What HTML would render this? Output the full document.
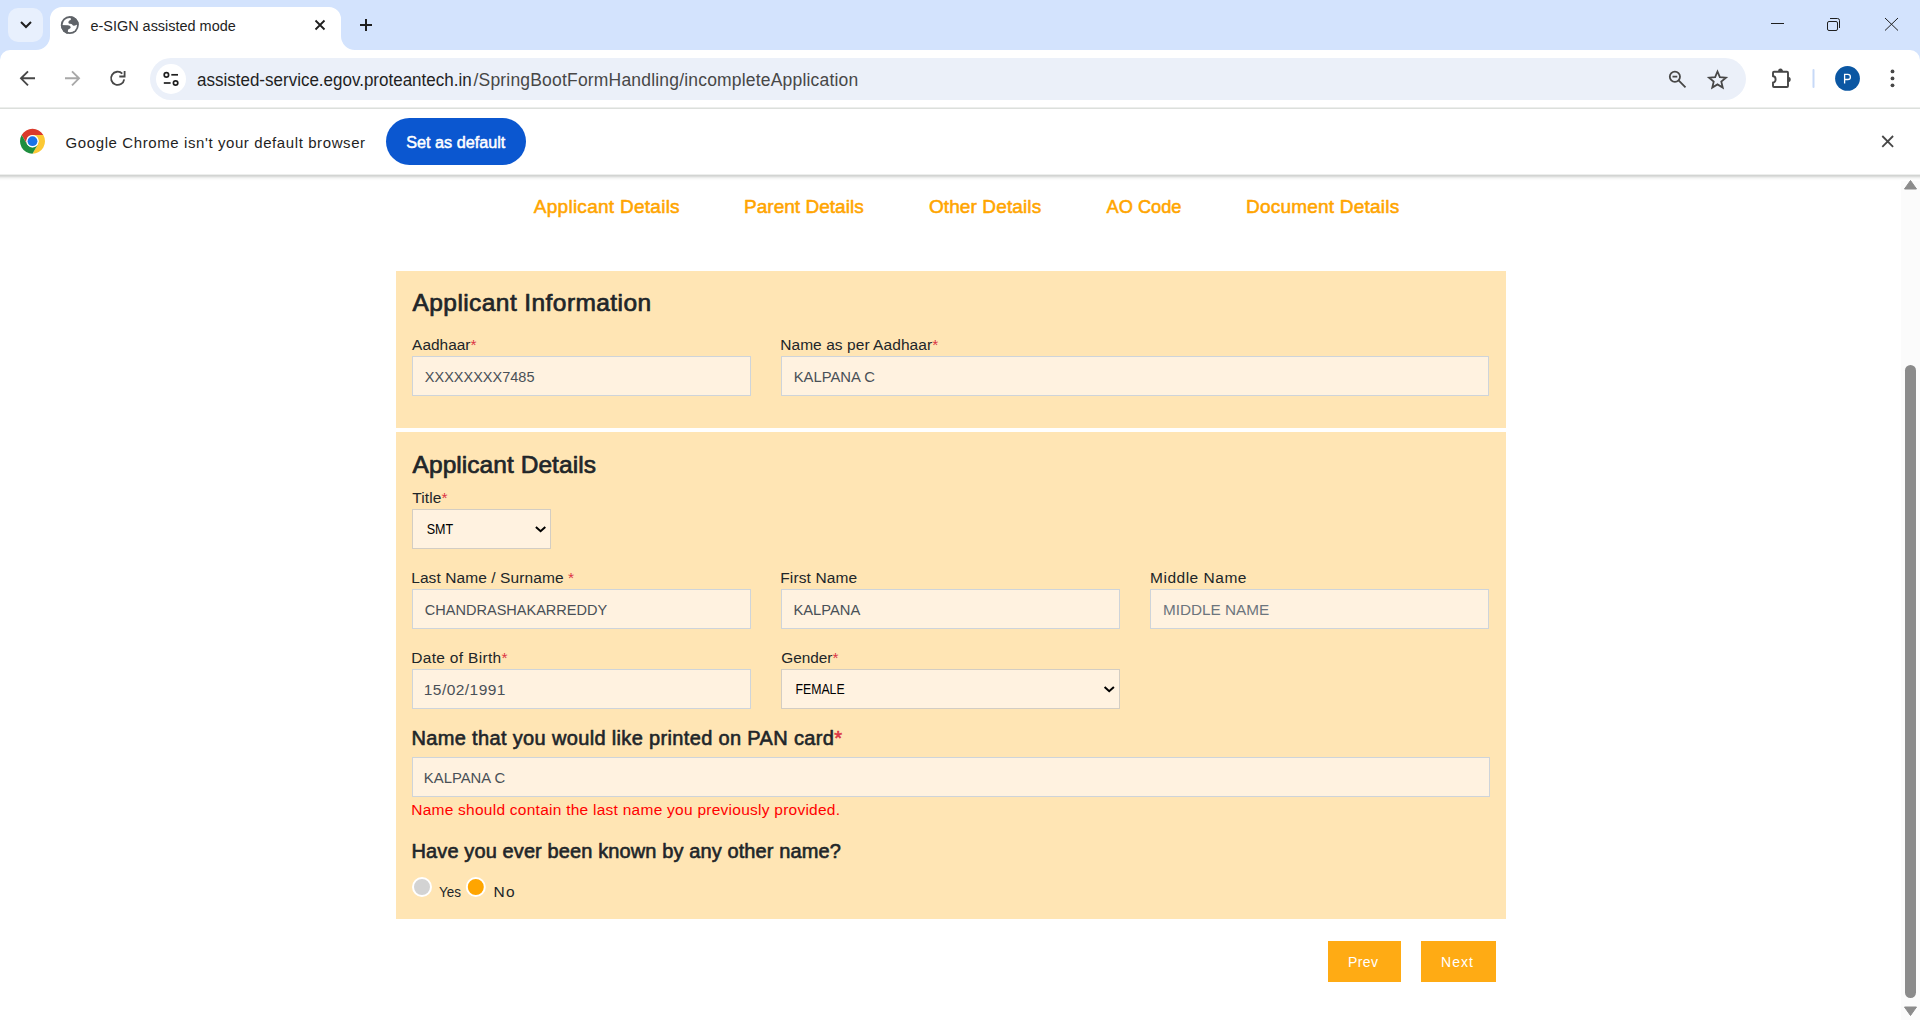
<!DOCTYPE html>
<html><head><meta charset="utf-8"><title>e-SIGN assisted mode</title>
<style>
html,body{margin:0;padding:0;width:1920px;height:1020px;overflow:hidden;background:#fff;font-family:"Liberation Sans",sans-serif;}
.a{position:absolute;box-sizing:border-box;}
.panel{background:#FFE5B4;}
.inp{background:#FFF2E0;border:1px solid #CED4DA;}
.sel{background:#FFF2E0;border:1px solid #D3CDC3;}
.btn{background:#FFAB14;}
svg.ov{position:absolute;left:0;top:0;width:1920px;height:1020px;}
svg text{font-family:"Liberation Sans",sans-serif;}
</style></head>
<body>
<!-- tab strip -->
<div class="a" style="left:0;top:0;width:1920px;height:64px;background:#D3E3FD"></div>
<!-- toolbar -->
<div class="a" style="left:0;top:50px;width:1920px;height:58px;background:#fff;border-radius:10px 10px 0 0"></div>
<div class="a" style="left:0;top:107px;width:1920px;height:1px;background:#ECEEEC"></div>
<div class="a" style="left:0;top:108px;width:1920px;height:1px;background:#DCDFDC"></div>
<!-- infobar -->
<div class="a" style="left:0;top:109px;width:1920px;height:65px;background:#fff"></div>
<div class="a" style="left:0;top:174px;width:1920px;height:1px;background:#EDEEED"></div>
<div class="a" style="left:0;top:175px;width:1920px;height:1px;background:#D2D4D2"></div>
<div class="a" style="left:0;top:176px;width:1920px;height:1px;background:#DCDDDC"></div>
<div class="a" style="left:0;top:177px;width:1920px;height:1px;background:#EBECEB"></div>
<div class="a" style="left:0;top:178px;width:1920px;height:1px;background:#F5F6F5"></div>
<div class="a" style="left:0;top:179px;width:1920px;height:1px;background:#FBFBFB"></div>
<div class="a" style="left:0;top:180px;width:1920px;height:1px;background:#FEFEFE"></div>
<!-- set as default button -->
<div class="a" style="left:386px;top:118px;width:140px;height:47px;border-radius:24px;background:#0B57D0"></div>
<!-- URL pill -->
<div class="a" style="left:150px;top:58px;width:1596px;height:42px;border-radius:21px;background:#EBF0F9"></div>
<div class="a" style="left:156px;top:64px;width:30px;height:30px;border-radius:15px;background:#fff"></div>
<!-- dropdown button -->
<div class="a" style="left:8px;top:8px;width:35px;height:34px;border-radius:10px;background:#E8F0FD"></div>

<!-- scrollbar -->
<div class="a" style="left:1901px;top:181px;width:19px;height:839px;background:#FBFBFB"></div>
<div class="a" style="left:1905px;top:365px;width:11px;height:633px;border-radius:5.5px;background:#8B8B8B"></div>

<!-- panels -->
<div class="a panel" style="left:396px;top:271px;width:1110px;height:157px"></div>
<div class="a panel" style="left:396px;top:432px;width:1110px;height:487px"></div>
<!-- inputs -->
<div class="a inp" style="left:412px;top:356px;width:339px;height:40px"></div>
<div class="a inp" style="left:781px;top:356px;width:708px;height:40px"></div>
<div class="a sel" style="left:412px;top:509px;width:139px;height:40px"></div>
<div class="a inp" style="left:412px;top:589px;width:339px;height:40px"></div>
<div class="a inp" style="left:781px;top:589px;width:339px;height:40px"></div>
<div class="a inp" style="left:1150px;top:589px;width:339px;height:40px"></div>
<div class="a inp" style="left:412px;top:669px;width:339px;height:40px"></div>
<div class="a sel" style="left:781px;top:669px;width:339px;height:40px"></div>
<div class="a inp" style="left:412px;top:757px;width:1078px;height:40px"></div>
<!-- buttons -->
<div class="a btn" style="left:1328px;top:941px;width:73px;height:41px"></div>
<div class="a btn" style="left:1421px;top:941px;width:75px;height:41px"></div>

<svg class="ov" width="1920" height="1020" viewBox="0 0 1920 1020">
<!-- active tab -->
<path d="M36 50 A14 14 0 0 0 50 36 L50 19 A12 12 0 0 1 62 7 L329 7 A12 12 0 0 1 341 19 L341 36 A14 14 0 0 0 355 50 Z" fill="#fff"/>
<!-- dropdown chevron -->
<path d="M21 22 L26 27 L31 22" fill="none" stroke="#1f1f1f" stroke-width="2"/>
<!-- globe favicon -->
<clipPath id="gclip"><circle cx="69.8" cy="25.1" r="9"/></clipPath>
<circle cx="69.8" cy="25.1" r="9" fill="#5F6368"/>
<circle cx="69.8" cy="25.1" r="7.2" fill="#fff"/>
<g clip-path="url(#gclip)" fill="#5F6368">
<path d="M70.8 15 L70.8 20.1 C69.6 20.3 68.4 21.2 68.4 22.4 C68.4 23.3 69.1 23.6 70.2 23.7 C71.8 23.8 72.3 24.4 72.7 25.2 C73.2 25.9 74.5 25.8 76.8 24.8 L80 24.8 L80 15 Z"/>
<path d="M59.5 25 L67.9 25.2 C69.3 25.3 70.6 26 70.7 27.2 C70.8 28.4 69.3 28.8 68.5 29.3 C67.9 29.8 67.9 31 67.9 31.8 L67.9 36 L59.5 36 Z"/>
</g>
<!-- tab close -->
<path d="M315.5 20.5 L324.5 29.5 M324.5 20.5 L315.5 29.5" stroke="#1f1f1f" stroke-width="1.8"/>
<!-- new tab plus -->
<path d="M366 19 V31 M360 25 H372" stroke="#1f1f1f" stroke-width="2"/>
<!-- window controls -->
<path d="M1771 23.5 H1784" stroke="#1f1f1f" stroke-width="1"/>
<rect x="1827.5" y="21.5" width="10" height="9" rx="1.5" fill="none" stroke="#1f1f1f" stroke-width="1"/>
<path d="M1830 18.5 H1837.5 A2 2 0 0 1 1839.5 20.5 V28" fill="none" stroke="#1f1f1f" stroke-width="1"/>
<path d="M1885 18 L1898 30.5 M1898 18 L1885 30.5" stroke="#1f1f1f" stroke-width="1"/>
<!-- back / forward / reload -->
<path d="M35 78.3 H21.5 M28 71.3 L21 78.3 L28 85.3" fill="none" stroke="#474747" stroke-width="1.9"/>
<path d="M65 78.3 H78.5 M72 71.3 L79 78.3 L72 85.3" fill="none" stroke="#A8A8A8" stroke-width="1.9"/>
<path d="M124.2 79.3 A6.6 6.6 0 1 1 122.3 73.6" fill="none" stroke="#474747" stroke-width="1.8"/>
<path d="M119.3 76.5 H124.6 V71" fill="none" stroke="#474747" stroke-width="1.8"/>
<!-- tune icon -->
<circle cx="166.4" cy="74.9" r="2.2" fill="none" stroke="#1f1f1f" stroke-width="1.7"/>
<path d="M171.3 74.8 H178" stroke="#1f1f1f" stroke-width="1.7"/>
<path d="M163.8 83 H170.6" stroke="#1f1f1f" stroke-width="1.7"/>
<circle cx="175.6" cy="83" r="2.2" fill="none" stroke="#1f1f1f" stroke-width="1.7"/>
<!-- zoom icon -->
<circle cx="1674.9" cy="76.7" r="5.1" fill="none" stroke="#474747" stroke-width="1.8"/>
<path d="M1678.6 80.4 L1685.5 87.3 M1672.5 76.7 H1677.3" stroke="#474747" stroke-width="1.8"/>
<!-- star -->
<path d="M1717.50 71.50 L1719.85 77.16 L1725.96 77.65 L1721.30 81.64 L1722.73 87.60 L1717.50 84.40 L1712.27 87.60 L1713.70 81.64 L1709.04 77.65 L1715.15 77.16 Z" fill="none" stroke="#474747" stroke-width="1.8" stroke-linejoin="miter"/>
<!-- puzzle -->
<path d="M1773 76.3 V72.8 A1 1 0 0 1 1774 71.8 H1787 A1 1 0 0 1 1788 72.8 V86 A1 1 0 0 1 1787 87 H1774 A1 1 0 0 1 1773 86 V82.5 A2.6 3.1 0 0 0 1773 76.3 Z" fill="none" stroke="#474747" stroke-width="1.9" stroke-linejoin="round"/>
<path d="M1778 72 A2.5 3.6 0 0 1 1783 72 Z" fill="#474747"/>
<path d="M1787.8 76.7 A2.9 2.7 0 0 1 1787.8 82.1 Z" fill="#474747"/>
<!-- divider -->
<path d="M1813.5 70 V87" stroke="#C7D9F7" stroke-width="2" stroke-linecap="round"/>
<!-- avatar -->
<circle cx="1847.5" cy="78.4" r="12.4" fill="#0B57A3"/>
<path d="M1844.6 83.5 V74.3 H1847.8 A2.6 2.6 0 0 1 1847.8 79.5 H1844.6" fill="none" stroke="#fff" stroke-width="1.3"/>
<!-- menu dots -->
<circle cx="1892.5" cy="71.4" r="1.9" fill="#474747"/>
<circle cx="1892.5" cy="78.4" r="1.9" fill="#474747"/>
<circle cx="1892.5" cy="85.3" r="1.9" fill="#474747"/>
<!-- chrome logo -->
<g transform="translate(32.5 141.2)">
<path d="M-10.825 -6.25 A12.5 12.5 0 0 1 10.825 -6.25 L0 -6.25 A6.25 6.25 0 0 0 -5.413 3.125 Z" fill="#DB3A2C"/>
<path d="M10.825 -6.25 A12.5 12.5 0 0 1 0 12.5 L5.413 3.125 A6.25 6.25 0 0 0 0 -6.25 Z" fill="#FCC934"/>
<path d="M0 12.5 A12.5 12.5 0 0 1 -10.825 -6.25 L-5.413 3.125 A6.25 6.25 0 0 0 5.413 3.125 Z" fill="#1E8E3E"/>
<circle r="6" fill="#fff"/>
<circle r="4.9" fill="#1A73E8"/>
</g>
<!-- infobar close -->
<path d="M1882.3 136 L1893.1 146.8 M1893.1 136 L1882.3 146.8" stroke="#474747" stroke-width="1.8"/>
<!-- scrollbar arrows -->
<path d="M1904.5 189 L1910.5 180.5 L1916.5 189 Z" fill="#8B8B8B" stroke="#8B8B8B" stroke-width="1" stroke-linejoin="round"/>
<path d="M1904.5 1007 L1916.5 1007 L1910.5 1015.5 Z" fill="#8B8B8B" stroke="#8B8B8B" stroke-width="1" stroke-linejoin="round"/>
<!-- select chevrons -->
<path d="M535.9 527 L540.6 531.2 L545.3 527" fill="none" stroke="#000" stroke-width="2"/>
<path d="M1104.6 687 L1109.2 691.2 L1113.9 687" fill="none" stroke="#000" stroke-width="2"/>
<!-- radios -->
<circle cx="422" cy="887" r="9" fill="#D3D3D3" stroke="#fff" stroke-width="2"/>
<circle cx="475.8" cy="887" r="9" fill="#FFA500" stroke="#fff" stroke-width="2"/>
<text transform="translate(90.40 30.80) scale(0.9645 1)" font-size="15.00" font-weight="400" letter-spacing="0.000"><tspan fill="#1f1f1f" stroke="none">e-SIGN assisted mode</tspan></text>
<text transform="translate(197.00 85.90) scale(0.9716 1)" font-size="17.50" font-weight="400" letter-spacing="0.000"><tspan fill="#1f1f1f" stroke="none">assisted-service.egov.proteantech.in</tspan></text>
<text transform="translate(473.50 85.90) scale(1.0000 1)" font-size="17.50" font-weight="400" letter-spacing="0.188"><tspan fill="#474747" stroke="none">/SpringBootFormHandling/incompleteApplication</tspan></text>
<text transform="translate(65.60 147.80) scale(1.0000 1)" font-size="15.00" font-weight="400" letter-spacing="0.594"><tspan fill="#1f1f1f" stroke="none">Google Chrome isn&#39;t your default browser</tspan></text>
<text transform="translate(406.25 148.20) scale(0.9822 1)" font-size="16.50" font-weight="400" letter-spacing="0.000" stroke-width="0.51" stroke-linejoin="round" class="semi"><tspan fill="#ffffff" stroke="#ffffff">Set as default</tspan></text>
<text transform="translate(533.77 213.00) scale(1.0000 1)" font-size="19.00" font-weight="400" letter-spacing="0.271" stroke-width="0.55" stroke-linejoin="round" class="semi"><tspan fill="#FFA500" stroke="#FFA500">Applicant Details</tspan></text>
<text transform="translate(744.07 213.00) scale(1.0000 1)" font-size="19.00" font-weight="400" letter-spacing="0.017" stroke-width="0.55" stroke-linejoin="round" class="semi"><tspan fill="#FFA500" stroke="#FFA500">Parent Details</tspan></text>
<text transform="translate(928.88 213.00) scale(1.0000 1)" font-size="19.00" font-weight="400" letter-spacing="0.115" stroke-width="0.55" stroke-linejoin="round" class="semi"><tspan fill="#FFA500" stroke="#FFA500">Other Details</tspan></text>
<text transform="translate(1106.56 213.00) scale(0.9586 1)" font-size="19.00" font-weight="400" letter-spacing="0.000" stroke-width="0.57" stroke-linejoin="round" class="semi"><tspan fill="#FFA500" stroke="#FFA500">AO Code</tspan></text>
<text transform="translate(1245.98 213.00) scale(1.0000 1)" font-size="19.00" font-weight="400" letter-spacing="0.220" stroke-width="0.55" stroke-linejoin="round" class="semi"><tspan fill="#FFA500" stroke="#FFA500">Document Details</tspan></text>
<text transform="translate(412.55 311.30) scale(1.0000 1)" font-size="24.50" font-weight="400" letter-spacing="0.419" stroke-width="0.70" stroke-linejoin="round" class="semi"><tspan fill="#212529" stroke="#212529">Applicant Information</tspan></text>
<text transform="translate(412.10 349.80) scale(0.9969 1)" font-size="15.50" font-weight="400" letter-spacing="0.000"><tspan fill="#212529" stroke="none">Aadhaar</tspan><tspan fill="#dc3545" stroke="none">*</tspan></text>
<text transform="translate(780.20 349.80) scale(1.0000 1)" font-size="15.50" font-weight="400" letter-spacing="0.061"><tspan fill="#212529" stroke="none">Name as per Aadhaar</tspan><tspan fill="#dc3545" stroke="none">*</tspan></text>
<text transform="translate(424.80 381.90) scale(0.9368 1)" font-size="15.50" font-weight="400" letter-spacing="0.000"><tspan fill="#495057" stroke="none">XXXXXXXX7485</tspan></text>
<text transform="translate(793.64 381.90) scale(0.9567 1)" font-size="15.50" font-weight="400" letter-spacing="0.000"><tspan fill="#495057" stroke="none">KALPANA C</tspan></text>
<text transform="translate(412.55 472.50) scale(1.0000 1)" font-size="24.50" font-weight="400" letter-spacing="0.054" stroke-width="0.70" stroke-linejoin="round" class="semi"><tspan fill="#212529" stroke="#212529">Applicant Details</tspan></text>
<text transform="translate(412.20 502.70) scale(1.0000 1)" font-size="15.50" font-weight="400" letter-spacing="0.119"><tspan fill="#212529" stroke="none">Title</tspan><tspan fill="#dc3545" stroke="none">*</tspan></text>
<text transform="translate(426.70 534.10) scale(0.8683 1)" font-size="14.50" font-weight="400" letter-spacing="0.000"><tspan fill="#000000" stroke="none">SMT</tspan></text>
<text transform="translate(411.20 583.20) scale(1.0000 1)" font-size="15.50" font-weight="400" letter-spacing="0.087"><tspan fill="#212529" stroke="none">Last Name / Surname </tspan><tspan fill="#dc3545" stroke="none">*</tspan></text>
<text transform="translate(780.20 583.20) scale(1.0000 1)" font-size="15.50" font-weight="400" letter-spacing="0.138"><tspan fill="#212529" stroke="none">First Name</tspan></text>
<text transform="translate(1150.00 583.20) scale(1.0000 1)" font-size="15.50" font-weight="400" letter-spacing="0.511"><tspan fill="#212529" stroke="none">Middle Name</tspan></text>
<text transform="translate(424.80 615.00) scale(0.9377 1)" font-size="15.50" font-weight="400" letter-spacing="0.000"><tspan fill="#495057" stroke="none">CHANDRASHAKARREDDY</tspan></text>
<text transform="translate(793.45 615.00) scale(0.9512 1)" font-size="15.50" font-weight="400" letter-spacing="0.000"><tspan fill="#495057" stroke="none">KALPANA</tspan></text>
<text transform="translate(1163.01 615.00) scale(0.9876 1)" font-size="15.50" font-weight="400" letter-spacing="0.000"><tspan fill="#6c757d" stroke="none">MIDDLE NAME</tspan></text>
<text transform="translate(411.20 662.70) scale(1.0000 1)" font-size="15.50" font-weight="400" letter-spacing="0.319"><tspan fill="#212529" stroke="none">Date of Birth</tspan><tspan fill="#dc3545" stroke="none">*</tspan></text>
<text transform="translate(781.20 662.70) scale(0.9913 1)" font-size="15.50" font-weight="400" letter-spacing="0.000"><tspan fill="#212529" stroke="none">Gender</tspan><tspan fill="#dc3545" stroke="none">*</tspan></text>
<text transform="translate(423.80 695.00) scale(1.0000 1)" font-size="15.50" font-weight="400" letter-spacing="0.449"><tspan fill="#495057" stroke="none">15/02/1991</tspan></text>
<text transform="translate(795.40 694.00) scale(0.8502 1)" font-size="14.50" font-weight="400" letter-spacing="0.000"><tspan fill="#000000" stroke="none">FEMALE</tspan></text>
<text transform="translate(411.50 745.00) scale(1.0000 1)" font-size="20.00" font-weight="400" letter-spacing="0.343" stroke-width="0.60" stroke-linejoin="round" class="semi"><tspan fill="#212529" stroke="#212529">Name that you would like printed on PAN card</tspan><tspan fill="#dc3545" stroke="#dc3545">*</tspan></text>
<text transform="translate(423.84 783.00) scale(0.9591 1)" font-size="15.50" font-weight="400" letter-spacing="0.000"><tspan fill="#495057" stroke="none">KALPANA C</tspan></text>
<text transform="translate(411.20 815.00) scale(1.0000 1)" font-size="15.50" font-weight="400" letter-spacing="0.253"><tspan fill="#ff0000" stroke="none">Name should contain the last name you previously provided.</tspan></text>
<text transform="translate(411.50 857.50) scale(1.0000 1)" font-size="20.00" font-weight="400" letter-spacing="0.110" stroke-width="0.60" stroke-linejoin="round" class="semi"><tspan fill="#212529" stroke="#212529">Have you ever been known by any other name?</tspan></text>
<text transform="translate(439.00 896.90) scale(0.8713 1)" font-size="15.50" font-weight="400" letter-spacing="0.000"><tspan fill="#212529" stroke="none">Yes</tspan></text>
<text transform="translate(493.40 896.90) scale(1.0000 1)" font-size="15.50" font-weight="400" letter-spacing="1.406"><tspan fill="#212529" stroke="none">No</tspan></text>
<text transform="translate(1348.00 966.70) scale(1.0000 1)" font-size="14.00" font-weight="400" letter-spacing="0.405"><tspan fill="#ffffff" stroke="none">Prev</tspan></text>
<text transform="translate(1441.00 966.70) scale(1.0000 1)" font-size="14.00" font-weight="400" letter-spacing="1.035"><tspan fill="#ffffff" stroke="none">Next</tspan></text>
</svg>
</body></html>
